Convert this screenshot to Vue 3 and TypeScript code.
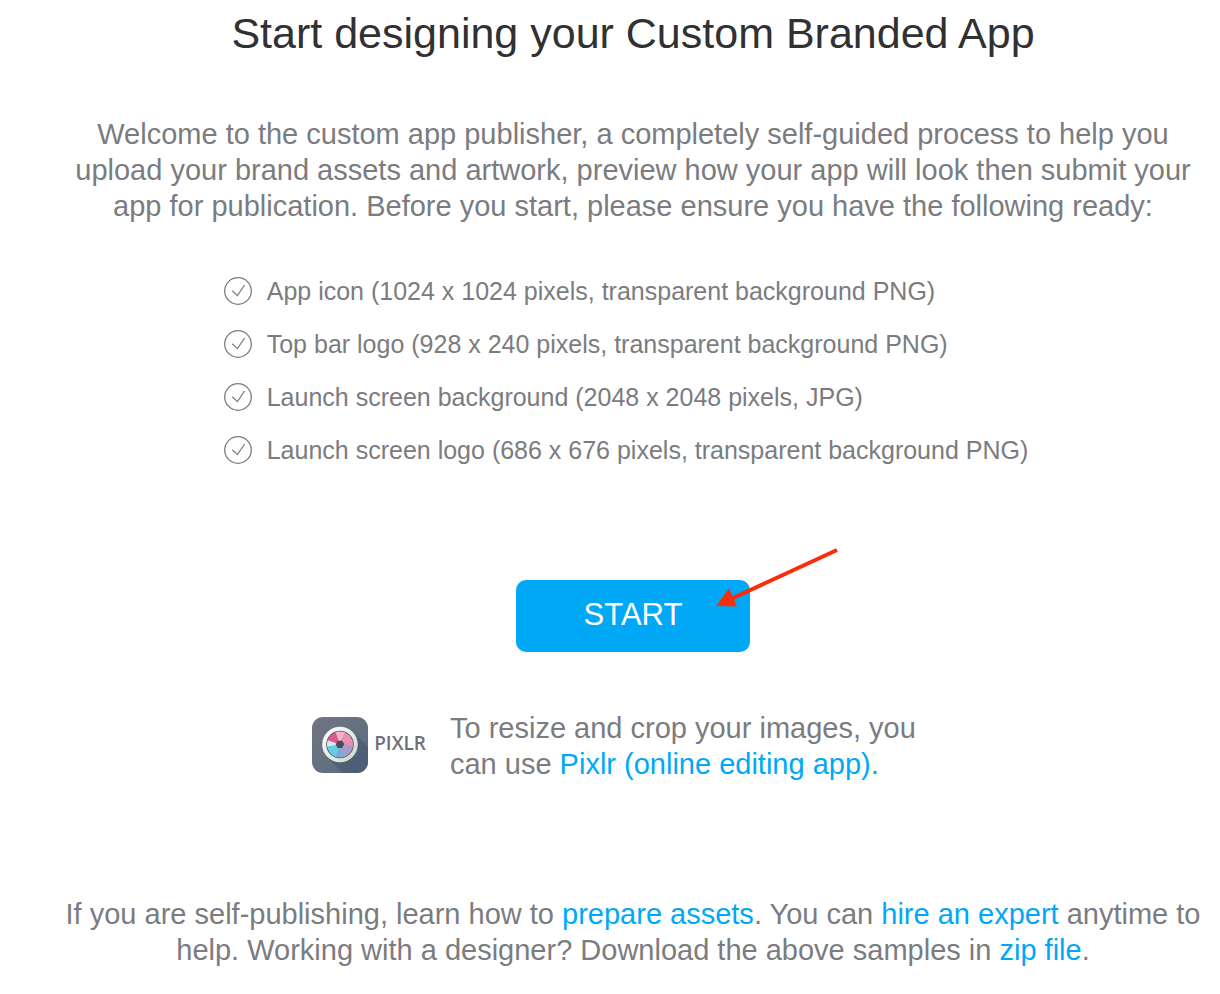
<script setup lang="ts">
interface Asset {
  name: string
  spec: string
}

const assets: Asset[] = [
  { name: 'App icon', spec: '1024 x 1024 pixels, transparent background PNG' },
  { name: 'Top bar logo', spec: '928 x 240 pixels, transparent background PNG' },
  { name: 'Launch screen background', spec: '2048 x 2048 pixels, JPG' },
  { name: 'Launch screen logo', spec: '686 x 676 pixels, transparent background PNG' },
]
</script>

<template>
  <main class="page">
    <h1 class="title">Start designing your Custom Branded App</h1>

    <p class="copy intro">
      Welcome to the custom app publisher, a completely self-guided process to help you<br />
      upload your brand assets and artwork, preview how your app will look then submit your<br />
      app for publication. Before you start, please ensure you have the following ready:
    </p>

    <ul class="assets">
      <li v-for="asset in assets" :key="asset.name" class="asset">
        <svg class="check" viewBox="0 0 28 28" aria-hidden="true">
          <circle cx="14" cy="14" r="13.3" />
          <path d="M8.2 13.7 13.4 18.6 20.6 8" />
        </svg>
        <span>{{ asset.name }} ({{ asset.spec }})</span>
      </li>
    </ul>

    <div class="action">
      <button type="button" class="start">START</button>
      <svg class="arrow" viewBox="0 0 124 60" aria-hidden="true">
        <path class="shaft" d="M122 2 18 50" />
        <path class="head" d="M1 58 14 40.5 22 58.5Z" />
      </svg>
    </div>

    <section class="pixlr">
      <div class="brand">
        <svg class="brand-icon" viewBox="0 0 56 56" aria-hidden="true">
          <defs>
            <linearGradient id="tile" x1="0" y1="0" x2="1" y2="1">
              <stop offset="0" stop-color="#717681" />
              <stop offset="1" stop-color="#596b80" />
            </linearGradient>
            <linearGradient id="rim" x1="0" y1="0" x2="1" y2="1">
              <stop offset="0" stop-color="#ffffff" />
              <stop offset="1" stop-color="#cbd8c5" />
            </linearGradient>
            <clipPath id="tile-clip"><rect width="56" height="56" rx="11" /></clipPath>
            <clipPath id="lens-clip"><circle cx="28" cy="27.5" r="13" /></clipPath>
          </defs>
          <g clip-path="url(#tile-clip)">
            <rect width="56" height="56" fill="url(#tile)" />
            <path d="M40.5 15 60 34V60H35L15.5 40.5Z" fill="#465a72" opacity=".7" />
          </g>
          <circle cx="28" cy="27.5" r="17.8" fill="url(#rim)" />
          <circle cx="28" cy="27.5" r="13.8" fill="#5b5864" />
          <g clip-path="url(#lens-clip)">
            <path d="M28 27.5 12 23 14 11 25 13Z" fill="#d95a8d" />
            <path d="M28 27.5 22 11 35 11Z" fill="#f2b3cb" />
            <path d="M28 27.5 34 12 44 21 43 30Z" fill="#e890b4" />
            <path d="M28 27.5 44 28 40 40 33 43Z" fill="#a99acb" />
            <path d="M28 27.5 35 43 21 43Z" fill="#81a9d6" />
            <path d="M28 27.5 23 43 12 38 13 28Z" fill="#64cce5" />
            <path d="M28 27.5 12 30 12 22Z" fill="#d9e6ed" />
          </g>
          <path d="M25.5 24 30 23.5 32.3 27 30 31 25.5 31 23.8 27.5Z" fill="#504b58" />
        </svg>
        <span class="brand-name">PIXLR</span>
      </div>
      <p class="copy">
        To resize and crop your images, you<br />
        can use <a href="#pixlr">Pixlr (online editing app).</a>
      </p>
    </section>

    <p class="copy outro">
      If you are self-publishing, learn how to <a href="#assets">prepare assets</a>. You can
      <a href="#expert">hire an expert</a> anytime to<br />
      help. Working with a designer? Download the above samples in <a href="#samples">zip file</a>.
    </p>
  </main>
</template>

<style>
body {
  margin: 0;
  background: #fff;
}
</style>

<style scoped>
.page {
  display: flex;
  flex-direction: column;
  align-items: center;
  padding: 7px 0 24px 46px;
  font-family: "Liberation Sans", Arial, sans-serif;
  color: #7b7c80;
}

.title {
  margin: 0;
  font-size: 43px;
  line-height: 52px;
  font-weight: 400;
  color: #303133;
  white-space: nowrap;
}

.copy {
  margin: 0;
  font-size: 29px;
  line-height: 36px;
  white-space: nowrap;
}

.intro,
.outro {
  text-align: center;
}

.intro {
  margin-top: 57px;
}

a {
  color: #00a8f6;
  text-decoration: none;
}

.assets {
  display: grid;
  gap: 17px;
  margin: 49px 14px 0 0;
  padding: 0;
  list-style: none;
  font-size: 25px;
  line-height: 36px;
  white-space: nowrap;
}

.asset {
  display: flex;
  align-items: center;
  gap: 15px;
}

.check {
  width: 28px;
  height: 28px;
  fill: none;
  stroke: #7b7c80;
  stroke-width: 1.3;
}

.action {
  position: relative;
  margin-top: 112px;
}

.start {
  display: block;
  width: 234px;
  height: 72px;
  padding: 0 0 2px;
  border: 0;
  border-radius: 10px;
  background: #00a8f6;
  color: #fff;
  font: 400 31px/40px "Liberation Sans", Arial, sans-serif;
  cursor: pointer;
}

.arrow {
  position: absolute;
  top: -32px;
  left: 199px;
  width: 124px;
  height: 60px;
  pointer-events: none;
}

.shaft {
  fill: none;
  stroke: #fb2c0a;
  stroke-width: 4;
}

.head {
  fill: #fb2c0a;
}

.pixlr {
  display: flex;
  align-items: center;
  gap: 24px;
  margin-top: 58px;
  margin-right: 38px;
}

.brand {
  display: flex;
  align-items: center;
  gap: 6px;
  padding-bottom: 2px;
}

.brand-icon {
  width: 56px;
  height: 56px;
}

.brand-name {
  padding-bottom: 4px;
  font: 600 19px/24px "Open Sans", sans-serif;
  color: #707174;
}

.outro {
  margin-top: 114px;
}
</style>
